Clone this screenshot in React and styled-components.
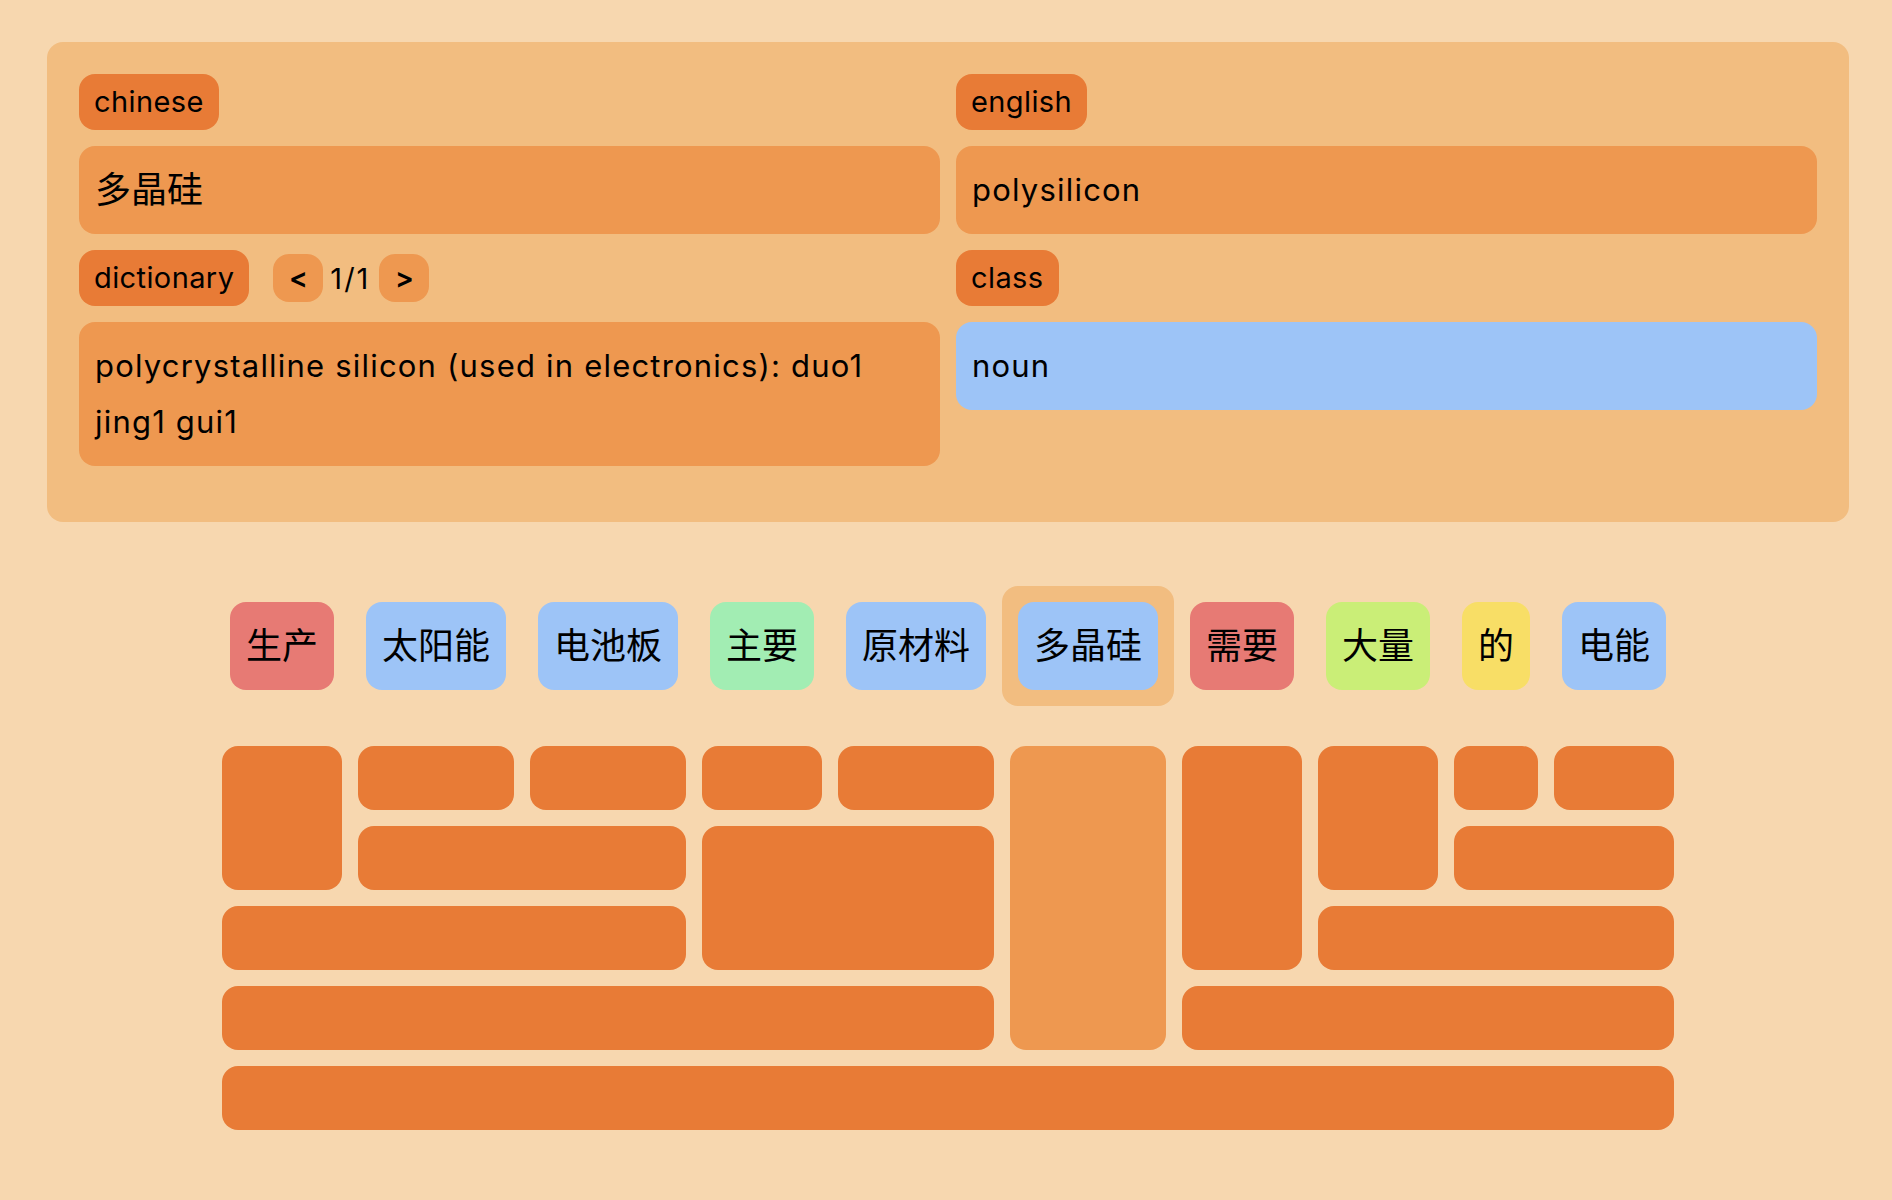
import React from 'react';
import styled, { createGlobalStyle } from 'styled-components';

const GlobalStyle = createGlobalStyle`
    html, body {
        margin: 0;
        padding: 0;
        background-color: #f7d7af;
    }
    body {
        font-family: Inter, "Noto Sans CJK SC", sans-serif;
        color: #000;
    }
`

const Page = styled.div`
    width: 1892px;
    min-height: 1200px;
    box-sizing: border-box;
    padding: 42px 0 0 4px;
    display: flex;
    flex-flow: column;
    align-items: center;
`

const Panel = styled.div`
    width: 1802px;
    box-sizing: border-box;
    padding: 32px 32px 56px;
    background-color: #f2bd80;
    border-radius: 16px;
    display: grid;
    grid-template-columns: 1fr 1fr;
    column-gap: 16px;
    row-gap: 16px;
    align-items: start;
`

const Label = styled.div`
    justify-self: start;
    padding: 0 15px;
    line-height: 56px;
    font-size: 29px;
    letter-spacing: 0.4px;
    background-color: #e87b36;
    border-radius: 16px;
`

const LabelRow = styled.div`
    display: flex;
    align-items: center;
`

const PageBtn = styled.button`
    width: 50px;
    height: 48px;
    margin-left: ${(props) => props.$first ? '24px' : '0'};
    padding: 0;
    border: none;
    border-radius: 16px;
    background-color: #ee9850;
    font-family: Inter, sans-serif;
    font-size: 28px;
    font-weight: 600;
    color: #000;
    cursor: pointer;
`

const PageCount = styled.span`
    margin: 0 9px 0 7px;
    font-size: 29px;
    letter-spacing: 2px;
`

const Field = styled.div`
    padding: 16px;
    line-height: 56px;
    font-size: ${(props) => props.$cjk ? '36px' : '31px'};
    letter-spacing: ${(props) => props.$cjk ? '0' : '1.2px'};
    background-color: ${(props) => props.$blue ? '#9dc4f7' : '#ee9850'};
    border-radius: 16px;
`

const Sentence = styled.div`
    margin-top: 64px;
    display: grid;
    grid-template-columns: repeat(10, auto);
    grid-template-rows: auto repeat(5, 64px);
    row-gap: 16px;
    justify-content: center;
`

const TokenCell = styled.div`
    padding: 16px;
    margin-bottom: 24px;
    border-radius: 16px;
    background-color: ${(props) => props.$active ? '#f2bd80' : 'transparent'};
`

const Token = styled.div`
    padding: 13px 16px 19px;
    line-height: 56px;
    font-size: 36px;
    font-family: "Noto Sans CJK SC", sans-serif;
    text-align: center;
    border-radius: 16px;
    background-color: ${(props) => props.$color};
`

const Block = styled.div`
    margin: 0 8px;
    border-radius: 16px;
    grid-column: ${(props) => props.$col} / span ${(props) => props.$span || 1};
    grid-row: ${(props) => props.$row + 1} / span ${(props) => props.$rows || 1};
    background-color: ${(props) => props.$active ? '#ee9850' : '#e87b36'};
`

const colors = {
    red: '#e77a74',
    blue: '#9dc4f7',
    green: '#a2edb3',
    lime: '#caee77',
    yellow: '#f8de66',
}

const tokens = [
    { text: '生产', color: 'red' },
    { text: '太阳能', color: 'blue' },
    { text: '电池板', color: 'blue' },
    { text: '主要', color: 'green' },
    { text: '原材料', color: 'blue' },
    { text: '多晶硅', color: 'blue', active: true },
    { text: '需要', color: 'red' },
    { text: '大量', color: 'lime' },
    { text: '的', color: 'yellow' },
    { text: '电能', color: 'blue' },
]

// arcs of the parse, one block per head span
const blocks = [
    { col: 1, row: 1, rows: 2 },
    { col: 2, row: 1 },
    { col: 3, row: 1 },
    { col: 4, row: 1 },
    { col: 5, row: 1 },
    { col: 6, row: 1, rows: 4, active: true },
    { col: 7, row: 1, rows: 3 },
    { col: 8, row: 1, rows: 2 },
    { col: 9, row: 1 },
    { col: 10, row: 1 },
    { col: 2, span: 2, row: 2 },
    { col: 4, span: 2, row: 2, rows: 2 },
    { col: 9, span: 2, row: 2 },
    { col: 1, span: 3, row: 3 },
    { col: 8, span: 3, row: 3 },
    { col: 1, span: 5, row: 4 },
    { col: 7, span: 4, row: 4 },
    { col: 1, span: 10, row: 5 },
]

const App = () => {
    return (
        <Page>
            <GlobalStyle />
            <Panel>
                <Label>chinese</Label>
                <Label>english</Label>
                <Field $cjk>多晶硅</Field>
                <Field>polysilicon</Field>
                <LabelRow>
                    <Label>dictionary</Label>
                    <PageBtn $first>&lt;</PageBtn>
                    <PageCount>1/1</PageCount>
                    <PageBtn>&gt;</PageBtn>
                </LabelRow>
                <Label>class</Label>
                <Field>polycrystalline silicon (used in electronics): duo1 jing1 gui1</Field>
                <Field $blue>noun</Field>
            </Panel>
            <Sentence>
                {tokens.map((t) => (
                    <TokenCell key={t.text} $active={t.active}>
                        <Token $color={colors[t.color]}>{t.text}</Token>
                    </TokenCell>
                ))}
                {blocks.map((b, i) => (
                    <Block key={i} $col={b.col} $span={b.span} $row={b.row} $rows={b.rows} $active={b.active} />
                ))}
            </Sentence>
        </Page>
    )
}

export default App;
